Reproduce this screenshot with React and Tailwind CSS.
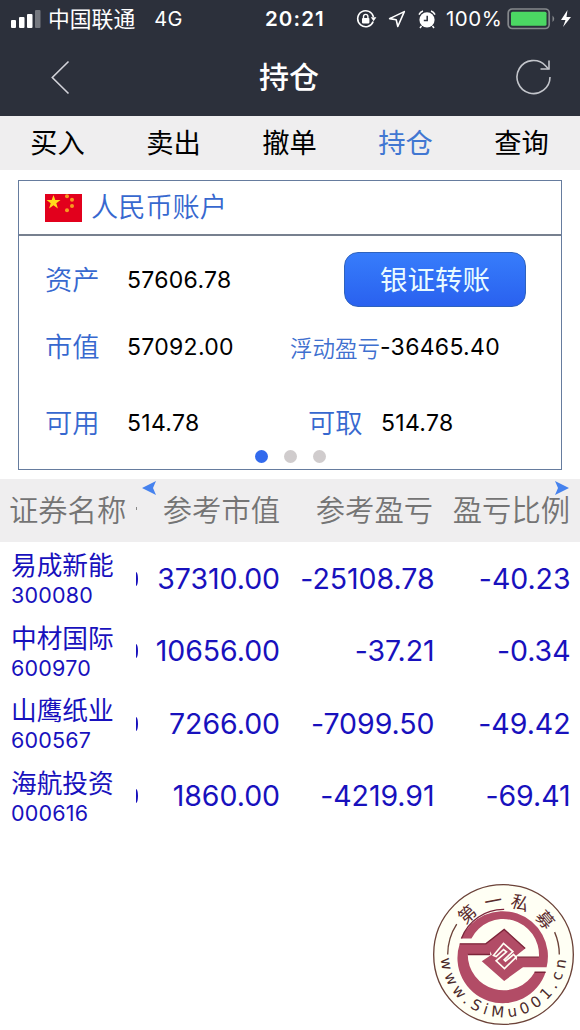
const TABS = ['买入', '卖出', '撤单', '持仓', '查询']

const HOLDINGS = [
  { name: '易成新能', code: '300080', value: '37310.00', profit: '-25108.78', ratio: '-40.23' },
  { name: '中材国际', code: '600970', value: '10656.00', profit: '-37.21', ratio: '-0.34' },
  { name: '山鹰纸业', code: '600567', value: '7266.00', profit: '-7099.50', ratio: '-49.42' },
  { name: '海航投资', code: '000616', value: '1860.00', profit: '-4219.91', ratio: '-69.41' },
]

function StatusBar() {
  return (
    <div className="relative flex h-[38px] items-center pl-[11px] text-[20px] text-white">
      <svg width="31" height="19" viewBox="0 0 31 19" fill="#fff">
        <rect x="0" y="10" width="5" height="8" rx="1" />
        <rect x="8" y="7" width="5.5" height="11" rx="1" />
        <rect x="16" y="4" width="5.5" height="14" rx="1" />
        <rect x="24" y="0" width="5.5" height="18" rx="1" opacity=".35" />
      </svg>
      <span className="ml-[6px] pt-px text-[21.8px] leading-none">中国联通</span>
      <span className="ml-[19px] tracking-[0.4px]">4G</span>
      <span className="absolute left-[265px] text-[20.5px] font-semibold tracking-[1.1px]">20:21</span>

      <div className="absolute left-[355px] flex items-center">
        {/* rotation lock */}
        <svg width="22" height="20" viewBox="0 0 22 20" fill="none" stroke="#fff" strokeWidth="1.6">
          <path d="M18.2 12.5A8 8 0 1 1 18.5 8" />
          <path d="M15.8 8.2h5.6l-2.8 4z" fill="#fff" stroke="none" />
          <rect x="7" y="9" width="7.4" height="5.4" rx=".8" fill="#fff" stroke="none" />
          <path d="M8.5 9V7.6a2.2 2.2 0 0 1 4.4 0V9" strokeWidth="1.4" />
        </svg>
        <svg className="ml-[11px]" width="18" height="18" viewBox="0 0 18 18" fill="none" stroke="#fff" strokeWidth="1.6" strokeLinejoin="round">
          <path d="M16.3 1.6 1.6 8.6l6.6 1.2 1.6 6.7z" />
        </svg>
        {/* alarm */}
        <svg className="ml-[12px]" width="18" height="19" viewBox="0 0 18 19" fill="none">
          <circle cx="9" cy="9.8" r="7.6" fill="#fff" />
          <path d="M1 4.6C1.8 2.8 3 1.6 5 1M17 4.6C16.2 2.8 15 1.6 13 1M3.5 16 2 18M14.5 16 16 18" stroke="#fff" strokeWidth="1.5" />
          <path d="M9.2 5.8v4.7H5.8" stroke="#2c303b" strokeWidth="1.5" />
        </svg>
      </div>
      <span className="absolute left-[446px] text-[20.5px] tracking-[0.5px]">100%</span>

      <svg className="absolute left-[507px] top-[8px]" width="66" height="22" viewBox="0 0 66 22">
        <rect x="1.2" y="1" width="41" height="19.5" rx="4" fill="none" stroke="#85888c" strokeWidth="1.7" />
        <rect x="4" y="3.7" width="35.5" height="14" rx="1.5" fill="#4bd763" />
        <path d="M45.5 7.5q3.5 3.3 0 6.6z" fill="#85888c" />
        <path d="M60.5 2 54 12h4.5L56 19l8-10h-4.5z" fill="#fff" />
      </svg>
    </div>
  )
}

function NavBar() {
  return (
    <div className="grid h-[78px] grid-cols-[1fr_62px_1fr] items-center pl-[50px] pr-[28px]">
      <svg width="36" height="36" viewBox="0 0 36 36" fill="none" stroke="#d3d3da" strokeWidth="1.6">
        <path d="M18.5 2.5 2.3 18.5l16.2 16" />
      </svg>
      <h1 className="-ml-[11px] whitespace-nowrap text-[30px] font-medium leading-none text-white">持仓</h1>
      <svg className="justify-self-end" width="36" height="38" viewBox="0 0 36 38" fill="none" stroke="#c3c5cb" strokeWidth="1.6">
        <path d="M34 19A16.5 16.5 0 1 1 29.500 7.700L32.500 11" />
        <path d="M33 2.500V11h-8.500" />
      </svg>
    </div>
  )
}

function Tabs() {
  return (
    <div className="grid h-[54px] grid-cols-[116px_116px_116px_116px_116px] items-center bg-[#efeeef] pt-[2px] text-center text-[27.3px] leading-none text-black">
      {TABS.map((tab) => (
        <span key={tab} className={tab === '持仓' ? '-ml-px text-[#4177d2]' : '-ml-px'}>{tab}</span>
      ))}
    </div>
  )
}

function Flag() {
  return (
    <svg width="37" height="28" viewBox="0 0 37 28" fill="#ffdb1c">
      <rect width="37" height="28" fill="#e2001c" />
      <path d="m8.500 1 1.800 5h5.200l-4.200 3.200 1.600 5.200-4.400-3.100-4.400 3.100 1.600-5.200L1.500 6h5.200z" />
      <g fill="#f79b20">
        <circle cx="22" cy="2.200" r="2" />
        <circle cx="27" cy="5.700" r="2" />
        <circle cx="27" cy="12" r="2" />
        <circle cx="22" cy="16.200" r="2" />
      </g>
    </svg>
  )
}

function Account() {
  return (
    <section className="mx-[18px] mt-[10px] h-[290px] border border-[#667c9e]">
      <div className="flex h-[55px] items-center border-b-2 border-[#77808f] pl-[26px]">
        <Flag />
        <span className="ml-[9px] pt-px text-[27.2px] font-[350] leading-none text-[#3768cf]">人民币账户</span>
      </div>
      <div className="grid h-[214px] grid-cols-[82px_164px_89px_1fr] grid-rows-[87px_46px_81px] items-center pl-[26px] text-[23px] leading-none tracking-[0.3px] text-black">
        <span className="pt-[2px] text-[27.300px] font-[350] tracking-normal text-[#3768cf]">资产</span>
        <span className="pt-[2px]">57606.78</span>
        <button className="col-span-2 ml-[53px] h-[55px] w-[182px] rounded-[14px] border border-[#2e62bd] bg-gradient-to-b from-[#377cfb] to-[#2a61ef] pt-[2px] text-[27.500px] leading-none tracking-normal text-[#e9fbff]">
          银证转账
        </button>
        <span className="pt-[3px] text-[27.300px] font-[350] tracking-normal text-[#3768cf]">市值</span>
        <span className="pt-[3px]">57092.00</span>
        <span className="-ml-px pt-[6px] text-[22.500px] font-[350] tracking-normal text-[#3f70cf]">浮动盈亏</span>
        <span className="pt-[3px]">-36465.40</span>
        <span className="pt-[28px] text-[27.300px] font-[350] tracking-normal text-[#3768cf]">可用</span>
        <span className="pt-[27px]">514.78</span>
        <span className="pl-[17px] pt-[28px] text-[27.300px] font-[350] tracking-normal text-[#3768cf]">可取</span>
        <span className="pl-px pt-[27px]">514.78</span>
      </div>
      <div className="flex justify-center gap-4">
        <i className="size-[13px] rounded-full bg-[#326aed]" />
        <i className="size-[13px] rounded-full bg-[#d0cccd]" />
        <i className="size-[13px] rounded-full bg-[#d0cccd]" />
      </div>
    </section>
  )
}

function Holdings() {
  return (
    <section className="mt-[9px]">
      <div className="relative grid h-[63px] grid-cols-[136px_144px_153px_137px] items-center bg-[#efeeef] pt-px text-right text-[29.300px] font-[350] leading-none text-[#747474]">
        <span className="pl-[9px] text-left">证券名称</span>
        <span>参考市值</span>
        <span>参考盈亏</span>
        <span>盈亏比例</span>
        <svg className="absolute left-[142px] top-[2px]" width="14" height="14" viewBox="0 0 14 14" fill="#4682ee">
          <path d="M0 7 14 0l-3 7 3 7z" />
        </svg>
        <svg className="absolute left-[554px] top-[2px]" width="15" height="14" viewBox="0 0 15 14" fill="#4682ee">
          <path d="M15 7 1 0l3 7-3 7z" />
        </svg>
        <i className="absolute left-[136px] top-[28px] h-[3px] w-px bg-[#888]" />
      </div>
      {HOLDINGS.map((row) => (
        <div key={row.code} className="grid h-[72.500px] grid-cols-[134px_4px_142px_154.500px_136px] items-center pt-px text-right text-[28.500px] leading-none tracking-[-0.050px] text-[#1811bd]">
          <div className="pl-[11px] pt-[3px] text-left">
            <div className="text-[25.700px] leading-[30px] tracking-normal">{row.name}</div>
            <div className="text-[21.500px] leading-[28px] tracking-[0.200px]">{row.code}</div>
          </div>
          {/* edge of the column scrolled under the fixed name column */}
          <i className="h-[14px] w-[4px] rounded-r-[50%] border-r-2 border-[#1811bd]" />
          <span>{row.value}</span>
          <span>{row.profit}</span>
          <span>{row.ratio}</span>
        </div>
      ))}
    </section>
  )
}

function Seal() {
  const chars = [['第', -42], ['一', -11], ['私', 18], ['募', 50]]
  return (
    <svg className="absolute left-[432px] top-[883px]" width="143" height="143" viewBox="-214 -214 428 428">
      <circle r="209" fill="#fffff4" stroke="#6b4238" strokeWidth="4" />
      <path d="M-167 0A167 167 0 0 1-140-91M167 0A167 167 0 0 0 153-67" fill="none" stroke="#6b4238" strokeWidth="4" />
      {chars.map(([c, angle]) => (
        <text key={c} transform={`rotate(${angle})`} y="-143" textAnchor="middle" fontSize="53" fill="#5a2b2d">{c}</text>
      ))}
      <path id="seal-arc" d="M-188 0A188 188 0 0 0 188 0" fill="none" />
      <text className="font-['DejaVu_Sans']" fontSize="45" fill="#4c2b2b">
        <textPath href="#seal-arc" startOffset="12" textLength="562">www.SiMu001.cn</textPath>
      </text>
      <g fill="#b24c66">
        <path d="M-126-48A135 135 0 0 1 129 38H40V8H106A107 107 0 0 0-96-48Z" />
        <path d="M126 53A135 135 0 0 1-131-32H-40V0H-107A107 107 0 0 0 93 53Z" />
        <path d="M2-75 65-18 32 8 58 38 2 79-65 20-35 0-53-32Z" />
      </g>
      <path d="M-126-48A135 135 0 0 1 2-135M-131-32H-53L2-75 65-18M106 8H40M126 53H93M-107 0H-40" fill="none" stroke="#7c2439" strokeWidth="4" />
      <path d="M-30 3 0-33 28-9 2 16 6 20 30 0 38 8 3 42-22 19 9-8 0-15-22 6Z" fill="#b24c66" stroke="#fffff4" strokeWidth="5" />
    </svg>
  )
}

export default function App() {
  return (
    <main className="relative h-[1030px] w-[580px] overflow-hidden bg-white font-[Inter,'Noto_Sans_CJK_SC',sans-serif]">
      <header className="h-[116px] bg-[#2c303b]">
        <StatusBar />
        <NavBar />
      </header>
      <Tabs />
      <Account />
      <Holdings />
      <Seal />
    </main>
  )
}
